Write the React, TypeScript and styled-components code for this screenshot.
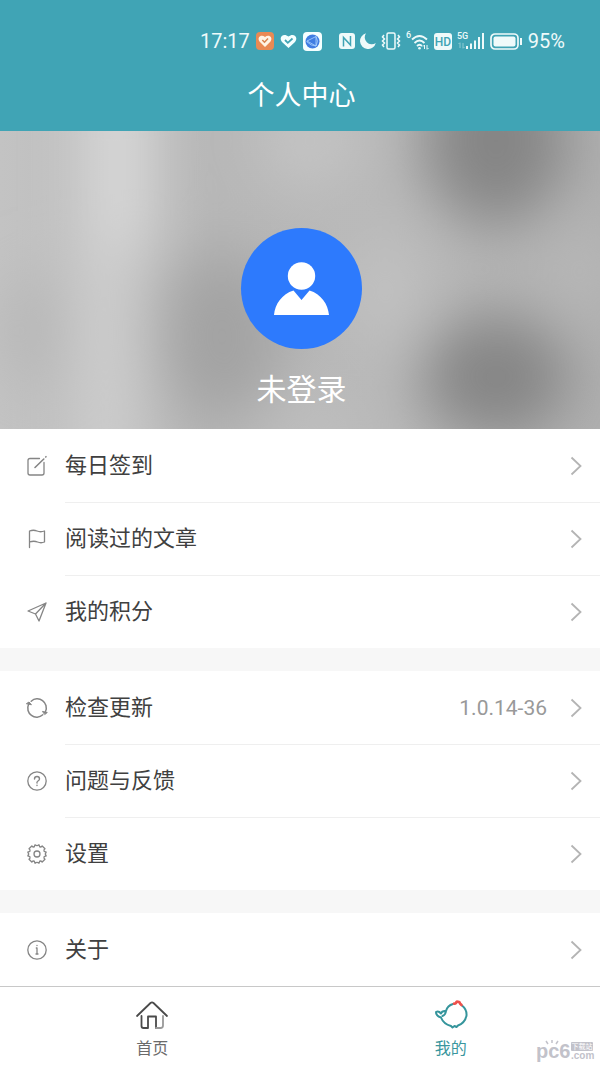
import React from "react";
import styled, { createGlobalStyle } from "styled-components";

const GlobalStyle = createGlobalStyle`
  * { box-sizing: border-box; }
  body {
    margin: 0;
    background: #fff;
    font-family: Roboto, "Noto Sans CJK SC", sans-serif;
    color: #404040;
  }
  svg { display: block; flex: none; }
`;

const centerInset = "3px";

const Page = styled.div`
  position: relative;
  min-height: 100vh;
  display: flex;
  flex-direction: column;
`;

const Header = styled.header`
  background: #40a4b5;
  color: #fff;
  padding: 26px 0 15px;
`;

const StatusBar = styled.div`
  display: flex;
  justify-content: flex-end;
  gap: 17px;
  height: 30px;
  padding-right: 35px;
`;

const StatusGroup = styled.div<{ $gap: number }>`
  display: flex;
  align-items: center;
  gap: ${(p) => p.$gap}px;
  color: #effafa;
  font-size: 20px;
  line-height: 30px;
`;

const Title = styled.h1`
  margin: 20px 0 0;
  padding-left: ${centerInset};
  font-size: 27px;
  line-height: 40px;
  font-weight: 400;
  text-align: center;
`;

const Hero = styled.section`
  position: relative;
  display: flex;
  flex-direction: column;
  align-items: center;
  height: 298px;
  padding: 97px 0 0 ${centerInset};
  overflow: hidden;
`;

const Backdrop = styled.svg`
  position: absolute;
  inset: 0;
  width: 100%;
  height: 100%;
`;

const Avatar = styled.button`
  position: relative;
  padding: 0;
  border: 0;
  border-radius: 50%;
  background: #2d7afd;
`;

const UserName = styled.p`
  position: relative;
  margin: 21px 0 0;
  font-size: 30px;
  line-height: 40px;
  color: #fff;
`;

const Menu = styled.main`
  flex: 1;
  display: flex;
  flex-direction: column;
  gap: 23px;
  background: #f7f7f7;
`;

const Group = styled.nav`
  background: #fff;
`;

const Row = styled.a`
  display: flex;
  align-items: center;
  height: 73px;
  padding-left: 26px;
  color: inherit;
  text-decoration: none;
`;

const RowBody = styled.span<{ $first: boolean }>`
  flex: 1;
  display: flex;
  align-items: center;
  height: 73px;
  margin-left: 17px;
  padding-right: 18px;
  border-top: 1px solid ${(p) => (p.$first ? "transparent" : "#efefef")};
  font-size: 22px;
  line-height: 32px;
`;

const Label = styled.span`
  flex: 1;
`;

const Version = styled.span`
  margin-right: 23px;
  font-size: 21px;
  color: #999;
`;

const TabBar = styled.nav`
  display: flex;
  height: 81px;
  padding-left: ${centerInset};
  border-top: 1px solid #c8c8c8;
  background: #fff;
`;

const Tab = styled.a<{ $active?: boolean }>`
  flex: 1;
  display: flex;
  flex-direction: column;
  align-items: center;
  gap: 5px;
  padding-top: 11px;
  font-size: 16px;
  line-height: 24px;
  color: ${(p) => (p.$active ? "#3a969e" : "#6b6b6b")};
  text-decoration: none;
`;

const Watermark = styled.div`
  position: absolute;
  right: 5px;
  bottom: 0;
  pointer-events: none;
`;

const LineIcon = ({ children }: { children: React.ReactNode }) => (
  <svg width="22" height="22" viewBox="0 0 22 22" fill="none" stroke="#858585" strokeWidth="1.3" strokeLinecap="round" strokeLinejoin="round" aria-hidden="true">
    {children}
  </svg>
);

const icons = {
  sign: (
    <LineIcon>
      <path d="M13.500 3.500H4Q2 3.500 2 5.500V18Q2 20 4 20H16Q18 20 18 18V7.500" />
      <path d="M9 12.500L17.800 4M19.700 2L20 1.700" strokeWidth="1.600" />
    </LineIcon>
  ),
  flag: (
    <LineIcon>
      <path d="M3.500 19.500V3Q7.500 1.500 11 3T18.500 3V14Q15 15.500 11.500 14T3.500 14" />
    </LineIcon>
  ),
  plane: (
    <LineIcon>
      <path d="M2 10L20 2L13 20L9.500 13ZM9.500 13L20 2" />
    </LineIcon>
  ),
  refresh: (
    <LineIcon>
      <path d="M5.200 4.200A9 9 0 0 1 19.500 14.500M16.800 17.800A9 9 0 0 1 2.500 7.500" strokeWidth="1.500" />
      <path d="M.7 6.500L3 5L5.200 7.500ZM16.800 14.500L21.300 15.500L19 17.300Z" fill="#858585" strokeWidth="1" />
    </LineIcon>
  ),
  help: (
    <LineIcon>
      <circle cx="11" cy="11" r="9.200" />
      <path d="M8.500 9Q8.500 6.500 11 6.500T13.500 9Q13.500 10 12 11T11 13M11 15.300V15.600" strokeWidth="1.400" />
    </LineIcon>
  ),
  gear: (
    <LineIcon>
      <circle cx="11" cy="11" r="3" />
      <path d="M9 1.800Q11 3.500 13 1.800L13.700 3.900Q15 4.300 16.200 3L19 5.800Q17.400 7 18.100 8.300L20.200 9Q18.500 11 20.200 13L18.100 13.700Q17.400 15 19 16.200L16.200 19Q15 17.700 13.700 18.100L13 20.200Q11 18.500 9 20.200L8.300 18.100Q7 17.700 5.800 19L3 16.200Q4.600 15 3.900 13.700L1.800 13Q3.500 11 1.800 9L3.900 8.300Q4.600 7 3 5.800L5.800 3Q7 4.300 8.300 3.900Z" />
    </LineIcon>
  ),
  info: (
    <LineIcon>
      <circle cx="11" cy="11" r="9.200" />
      <path d="M10.300 9H11V15M10 15H12M11 6.300V6.600" />
    </LineIcon>
  ),
};

type Item = { icon: keyof typeof icons; label: string; value?: string };

const groups: Item[][] = [
  [
    { icon: "sign", label: "每日签到" },
    { icon: "flag", label: "阅读过的文章" },
    { icon: "plane", label: "我的积分" },
  ],
  [
    { icon: "refresh", label: "检查更新", value: "1.0.14-36" },
    { icon: "help", label: "问题与反馈" },
    { icon: "gear", label: "设置" },
  ],
  [{ icon: "info", label: "关于" }],
];

const Chevron = () => (
  <svg width="12" height="20" viewBox="0 0 12 20" fill="none" stroke="#b4b4b4" strokeWidth="1.800" aria-hidden="true">
    <path d="M1.500 1.500L10.500 10L1.500 18.500" />
  </svg>
);

const HeroBackdrop = () => (
  <Backdrop viewBox="0 0 600 298" preserveAspectRatio="none" aria-hidden="true">
    <defs>
      <filter id="soft" x="-50%" y="-50%" width="200%" height="200%">
        <feGaussianBlur stdDeviation="30" />
      </filter>
      <linearGradient id="base">
        <stop offset="0" stopColor="#c3c3c3" />
        <stop offset="0.35" stopColor="#b7b7b7" />
        <stop offset="0.66" stopColor="#b8b8b8" />
        <stop offset="1" stopColor="#b0b0b0" />
      </linearGradient>
    </defs>
    <rect width="600" height="298" fill="url(#base)" />
    <g filter="url(#soft)">
      <rect x="88" y="-60" width="60" height="180" fill="#dcdcdc" />
      <rect x="82" y="110" width="50" height="250" fill="#d2d2d2" />
      <ellipse cx="35" cy="200" rx="25" ry="60" fill="#b4b4b4" />
      <ellipse cx="222" cy="205" rx="60" ry="85" fill="#a3a3a3" />
      <ellipse cx="310" cy="10" rx="50" ry="50" fill="#c4c4c4" />
      <ellipse cx="385" cy="160" rx="34" ry="60" fill="#c2c2c2" />
      <ellipse cx="310" cy="300" rx="60" ry="30" fill="#c0c0c0" />
      <ellipse cx="496" cy="10" rx="72" ry="84" fill="#858585" />
      <ellipse cx="496" cy="246" rx="74" ry="62" fill="#858585" />
      <ellipse cx="580" cy="140" rx="30" ry="50" fill="#b8b8b8" />
    </g>
  </Backdrop>
);

const Status = () => (
  <StatusBar>
    <StatusGroup $gap={6}>
      <span>17:17</span>
      <svg width="18" height="18" viewBox="0 0 18 18">
        <rect width="18" height="18" rx="4" fill="#e98a54" />
        <path d="M9 15L3.500 9.500C.5 5 5.500 2 9 5C12.500 2 17.500 5 14.500 9.500Z" fill="#fff5e5" />
        <path d="M6.300 8L8.500 10.200L12 6.500" fill="none" stroke="#d8834f" strokeWidth="1.500" />
      </svg>
      <svg width="17" height="18" viewBox="0 0 17 18">
        <path d="M8.500 16L2 10C-2 4.500 4 .5 8.500 4.500C13 .5 19 4.500 15 10Z" fill="#f4ffff" />
        <path d="M5 8L7.800 10.800L12.500 6.500" fill="none" stroke="#40a4b5" strokeWidth="1.800" />
      </svg>
      <svg width="19" height="19" viewBox="0 0 19 19">
        <rect width="19" height="19" rx="4" fill="#f4ffff" />
        <circle cx="9.500" cy="9.500" r="7" fill="#3f7de2" />
        <path d="M4 9L13 4.500V14ZM3.500 9.500Q8 14 13 14M13 4.500Q16 9 13 14" fill="none" stroke="#a9d3ff" strokeWidth="0.8" />
      </svg>
    </StatusGroup>
    <StatusGroup $gap={5}>
      <svg width="16" height="16" viewBox="0 0 16 16">
        <rect width="16" height="16" rx="3" fill="#effafa" />
        <path d="M4.500 13.500V4.500L11.500 12V3" fill="none" stroke="#40a4b5" strokeWidth="1.500" />
      </svg>
      <svg width="16" height="16" viewBox="0 0 16 16">
        <path d="M6 .3A8 8 0 1 0 15.800 10A7 7 0 0 1 6 .3Z" fill="#effafa" />
      </svg>
      <svg width="20" height="18" viewBox="0 0 20 18" fill="none" stroke="#effafa" strokeWidth="1.500">
        <rect x="6" y="1" width="8" height="16" rx="1.500" />
        <path d="M3 3L1.500 5L3.500 7L1.500 9L3.500 11L1.500 13L3 15M17 3L18.500 5L16.500 7L18.500 9L16.500 11L18.500 13L17 15" />
      </svg>
      <svg width="23" height="20" viewBox="0 0 23 20" fill="none" stroke="#effafa" strokeWidth="1.800">
        <path d="M6 8.500Q13.500 1.500 21 8.500M8.500 12Q13.500 7 18.500 12M11 15Q13.500 12.500 16 15" />
        <circle cx="13.500" cy="17.200" r="1.300" fill="#effafa" stroke="none" />
        <path d="M18.500 14V18M17 15.500L18.500 14M21 14V18M21 18.500L22.500 17" strokeWidth="1" />
        <text x="0" y="7" fontSize="9" fontWeight="500" fill="#effafa" stroke="none">6</text>
      </svg>
      <svg width="18" height="17" viewBox="0 0 18 17">
        <rect width="18" height="17" rx="3" fill="#effafa" />
        <text x="9" y="13" textAnchor="middle" fontSize="12" fontWeight="500" fill="#40a4b5">HD</text>
      </svg>
      <svg width="28" height="20" viewBox="0 0 28 20" fill="#effafa">
        <text x="0" y="8" fontSize="9" fontWeight="500">5G</text>
        <path d="M9 15h2v3h-2zM13 12.500h2v5.500h-2zM17 9.500h2v8.500h-2zM21 6h2v12h-2zM25 2h2v16h-2z" />
        <path d="M3 12V17M1.500 13L3 11.500M6 12V17M6 17.500L7.500 16" fill="none" stroke="#8fcbd3" />
      </svg>
      <svg width="33" height="17" viewBox="0 0 33 17">
        <rect x="1" y="1" width="27" height="15" rx="4" fill="none" stroke="#effafa" strokeWidth="1.700" />
        <rect x="3.500" y="3.500" width="22" height="10" rx="2" fill="#effafa" />
        <path d="M31 5V12" stroke="#effafa" strokeWidth="2" />
      </svg>
      <span>95%</span>
    </StatusGroup>
  </StatusBar>
);

export default function App() {
  return (
    <Page>
      <GlobalStyle />
      <Header>
        <Status />
        <Title>个人中心</Title>
      </Header>
      <Hero>
        <HeroBackdrop />
        <Avatar type="button" aria-label="登录">
          <svg width="121" height="121" viewBox="0 0 121 121" fill="#fff">
            <circle cx="60.500" cy="48" r="13.700" />
            <path d="M33 87C34 76 41 66 52.500 62.500L60.500 72L68.500 62.500C80 66 87 76 88 87Z" />
          </svg>
        </Avatar>
        <UserName>未登录</UserName>
      </Hero>
      <Menu>
        {groups.map((items, g) => (
          <Group key={g}>
            {items.map((item, i) => (
              <Row href="#" key={item.label}>
                {icons[item.icon]}
                <RowBody $first={i === 0}>
                  <Label>{item.label}</Label>
                  {item.value && <Version>{item.value}</Version>}
                  <Chevron />
                </RowBody>
              </Row>
            ))}
          </Group>
        ))}
      </Menu>
      <TabBar>
        <Tab href="#">
          <svg width="34" height="34" viewBox="0 0 34 34" fill="none" stroke="#4a4a4a" strokeWidth="1.800" strokeLinecap="round" strokeLinejoin="round">
            <path d="M2 18L15.500 5Q17 3.700 18.500 5L32 18" />
            <path d="M6.500 18V28Q6.500 30 8.500 30H13V18.500H21V30" />
            <path d="M21 30H25.500Q28 30 28 27.500V18" stroke="#999" />
          </svg>
          首页
        </Tab>
        <Tab href="#" $active aria-current="page">
          <svg width="34" height="34" viewBox="0 0 34 34" fill="none" stroke="#35959c" strokeWidth="2" strokeLinecap="round" strokeLinejoin="round">
            <path d="M19 6Q13.500 7.500 12 13Q11.500 17 8.500 18M28 7.500Q33 11.500 32.500 17.500Q31 25 24 27.500L22.500 29L20.500 28L18.500 29.500L17 28Q9.500 26 7 19.500Q2 18 2 14Q4.500 12.500 7 15.500Q8 12.500 12 13" />
            <path d="M20 5.500Q21 6 22 5Q22.500 3 24 4Q25.500 3.500 26 5.500L27.500 7" stroke="#ee514c" strokeWidth="2.600" />
          </svg>
          我的
        </Tab>
      </TabBar>
      <Watermark>
        <svg width="60" height="28" viewBox="0 0 60 28" fill="#c2c2ca">
          <text x="1" y="19" fontFamily="Liberation Sans, sans-serif" fontWeight="700" fontSize="20">pc6</text>
          <rect x="36" y="3" width="22" height="9" rx="1" />
          <text x="47" y="10" textAnchor="middle" fontSize="7" fill="#fff">下载站</text>
          <text x="36" y="20" fontFamily="Liberation Sans, sans-serif" fontWeight="700" fontSize="10">.com</text>
          <path d="M13 5L11 2M17 4V1M21 5L23 2" stroke="#c2c2ca" strokeWidth="1.500" />
        </svg>
      </Watermark>
    </Page>
  );
}
